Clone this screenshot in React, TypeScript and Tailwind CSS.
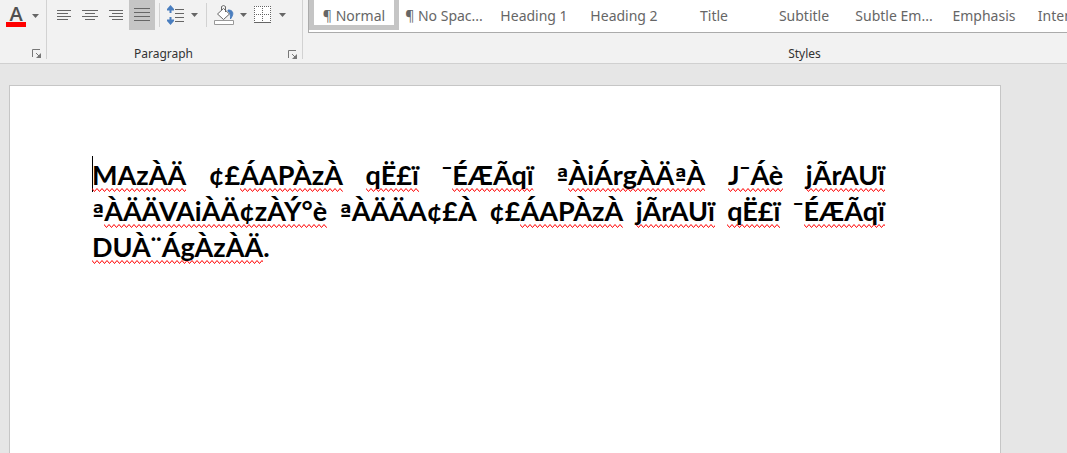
import type { ReactNode } from 'react';

interface Word {
  plain?: string;
  flagged?: string;
  after?: string;
}

interface StyleItem {
  name: string;
  mark?: boolean;
  active?: boolean;
}

const styleItems: StyleItem[] = [
  { name: 'Normal', mark: true, active: true },
  { name: 'No Spac...', mark: true },
  { name: 'Heading 1' },
  { name: 'Heading 2' },
  { name: 'Title' },
  { name: 'Subtitle' },
  { name: 'Subtle Em...' },
  { name: 'Emphasis' },
  { name: 'Intense E...' },
];

const lines: Word[][] = [
  [
    { flagged: 'MAzÀÄ' },
    { plain: '¢£', flagged: 'ÁAPÀzÀ' },
    { flagged: 'qË£ï' },
    { plain: '¯', flagged: 'ÉÆÃqï' },
    { plain: 'ª', flagged: 'ÀiÁrgÀÄªÀ' },
    { flagged: 'J¯Áè' },
    { flagged: 'jÃrAUï' },
  ],
  [
    { plain: 'ª', flagged: 'ÀÄÄVAiÀÄ¢zÀÝ°è' },
    { plain: 'ªÀÄÄA¢£À' },
    { plain: '¢£', flagged: 'ÁAPÀzÀ' },
    { flagged: 'jÃrAUï' },
    { flagged: 'qË£ï' },
    { plain: '¯', flagged: 'ÉÆÃqï' },
  ],
  [{ flagged: 'DUÀ¨ÁgÀzÀÄ', after: '.' }],
];

function Caret() {
  return (
    <svg width="7" height="4" viewBox="0 0 7 4" aria-hidden="true">
      <path d="M0 0h7L3.5 4z" fill="#666" />
    </svg>
  );
}

function Launcher({ label }: { label: string }) {
  return (
    <button aria-label={label} className="shrink-0">
      <svg width="10" height="9" viewBox="0 0 10 9" fill="none" stroke="#777" aria-hidden="true">
        <path d="M.5 8V.5H8M4 4l3 3" />
        <path d="M9 4v5H4z" fill="#777" stroke="none" />
      </svg>
    </button>
  );
}

function Divider({ className }: { className: string }) {
  return <div className={`w-px shrink-0 bg-[#d2d2d2] ${className}`} />;
}

function AlignIcon({ d }: { d: string }) {
  return (
    <svg width="16" height="14" viewBox="0 0 16 14" stroke="#666" aria-hidden="true">
      <path d={d} />
    </svg>
  );
}

function ToolButton({ label, className, children }: { label: string; className: string; children: ReactNode }) {
  return (
    <button aria-label={label} className={`flex shrink-0 items-center ${className}`}>
      {children}
    </button>
  );
}

// Lato's ordinal has no underline, so that one glyph comes from DejaVu
function Glyphs({ text }: { text: string }) {
  return text.split(/(ª)/).map((part, i) =>
    part === 'ª' ? (
      <span key={i} className="font-['DejaVu_Sans_Condensed','DejaVu_Sans',sans-serif] text-2xl leading-none">
        ª
      </span>
    ) : (
      part
    )
  );
}

function Squiggle({ text }: { text: string }) {
  return (
    <span className="relative">
      <svg className="absolute -bottom-px left-0 h-1 w-full" aria-hidden="true">
        <rect width="100%" height="4" fill="url(#squiggle)" />
      </svg>
      <span className="relative">
        <Glyphs text={text} />
      </span>
    </span>
  );
}

export default function App() {
  return (
    <div className="flex h-screen flex-col overflow-hidden bg-[#e6e6e6] font-['Noto_Sans','Open_Sans',sans-serif]">
      <svg width="0" height="0" className="absolute" aria-hidden="true">
        <pattern id="squiggle" width="5" height="4" patternUnits="userSpaceOnUse">
          <path d="M-2.5 3.5L0 .5L2.5 3.5L5 .5L7.5 3.5" fill="none" stroke="#f00" />
        </pattern>
      </svg>

      {/* Ribbon */}
      <header className="flex h-16 shrink-0 border-b border-[#d0d0d0] bg-[#f2f2f2]">
        <section aria-label="Font" className="flex w-[46px] shrink-0 flex-col justify-between pb-[5px]">
          <ToolButton label="Font colour" className="h-8 gap-1.5 pl-1.5">
            <span className="flex w-5 flex-col items-center pb-1">
              <span className="h-5 font-['Open_Sans',sans-serif] text-xl leading-6 font-semibold text-[#505050]">A</span>
              <span className="h-[5px] w-5 bg-[#f00]" />
            </span>
            <Caret />
          </ToolButton>
          <div className="flex justify-end pr-1">
            <Launcher label="Font settings" />
          </div>
        </section>
        <Divider className="h-[59px]" />

        {/* Paragraph */}
        <section aria-label="Paragraph" className="flex w-[255px] shrink-0 flex-col justify-between">
          <div className="flex h-8 items-center pb-0.5">
            <ToolButton label="Align left" className="ml-1 h-[30px] w-[26px] justify-center">
              <AlignIcon d="M1 2.5h14M1 5.5h11M1 8.5h14M1 11.5h11" />
            </ToolButton>
            <ToolButton label="Centre" className="h-[30px] w-[26px] justify-center">
              <AlignIcon d="M0 2.5h16M3 5.5h10M0 8.5h16M3 11.5h10" />
            </ToolButton>
            <ToolButton label="Align right" className="h-[30px] w-[26px] justify-center">
              <AlignIcon d="M1 2.5h14M4 5.5h11M1 8.5h14M4 11.5h11" />
            </ToolButton>
            <ToolButton label="Justify" className="h-[30px] w-[26px] justify-center bg-[#c5c5c5]">
              <AlignIcon d="M0 .5h16M0 4.5h16M0 8.5h16M0 12.5h16" />
            </ToolButton>
            <Divider className="mx-1 h-6" />
            <ToolButton label="Line spacing" className="gap-1.5 pl-[3px]">
              <svg width="18" height="20" viewBox="0 0 18 20" fill="none" aria-hidden="true">
                <path d="M8 4.5h9M8 8.5h9M8 12.5h9M8 16.5h9" stroke="#666" />
                <path d="M3.5 2v6M3.5 12v6" stroke="#4a7ebf" strokeWidth="2" />
                <path d="M3.5 0L7 4v1.5H0V4zM3.5 20L7 16v-1.5H0V16z" fill="#4a7ebf" />
              </svg>
              <Caret />
            </ToolButton>
            <Divider className="ml-2 h-6" />
            <ToolButton label="Shading" className="gap-1.5 pl-[7px]">
              <svg width="20" height="20" viewBox="0 0 20 20" fill="none" aria-hidden="true">
                <path d="M14 5c4 0 5.5 2 4.5 5.5l-2 3.5c0-4 0-6-2.5-8z" fill="#4a7ebf" stroke="#4a7ebf" />
                <path d="M3.5 9l6-5.5 6 5.5-6 5.5z" fill="#fff" stroke="#666" />
                <path d="M7.5 5V1.5Q9.5-.5 11.5 1.5V7" stroke="#666" />
                <path d="M.5 15.5h19v4H.5z" fill="#fff" stroke="#999" />
              </svg>
              <Caret />
            </ToolButton>
            <ToolButton label="Borders" className="gap-2 pl-[7px]">
              <svg width="17" height="18" viewBox="0 0 17 18" fill="none" stroke="#666" aria-hidden="true">
                <path d="M0 0h17v17H0z" fill="#fff" stroke="none" />
                <path d="M0 .5h17M0 8.5h17M.5 0v16M8.5 0v16M16.5 0v16" strokeDasharray="1 1" />
                <path d="M0 16.5h17" />
              </svg>
              <Caret />
            </ToolButton>
          </div>
          <div className="flex items-center pr-1 pb-px">
            <span className="flex-1 pr-2 text-center text-xs leading-4 text-[#333]">Paragraph</span>
            <Launcher label="Paragraph settings" />
          </div>
        </section>
        <Divider className="h-[59px]" />

        {/* Styles gallery */}
        <section aria-label="Styles" className="flex min-w-0 flex-1 flex-col justify-between pl-[5px]">
          <div className="flex h-[33px] overflow-hidden border-b border-l border-[#ababab] bg-white">
            {styleItems.map((item) => (
              <button
                key={item.name}
                className={`flex w-[90px] shrink-0 items-center justify-center text-sm whitespace-nowrap text-[#666] ${
                  item.active ? 'h-[30px] border-x-[5px] border-b-[5px] border-[#c5c5c5] pt-1.5' : 'h-8'
                }`}
              >
                {item.mark ? '¶ ' : ''}
                {item.name}
              </button>
            ))}
          </div>
          <span className="w-full pb-px pl-[234px] text-center text-xs leading-4 text-[#333]">Styles</span>
        </section>
      </header>

      {/* Page */}
      <main className="mt-[21px] mr-[66px] ml-[9px] flex-1 border border-b-0 border-[#c6c6c6] bg-white px-[82px] pt-[71px]">
        <div className="mr-[33px] font-['Lato',sans-serif] text-[27px] leading-9 font-bold text-black">
          {lines.map((line, i) => (
            <p key={i} className="relative flex justify-between whitespace-nowrap">
              {i === 0 && <span className="absolute -top-px left-0 h-9 w-px bg-black" />}
              {line.map((word, j) => (
                <span key={j}>
                  {word.plain && <Glyphs text={word.plain} />}
                  {word.flagged && <Squiggle text={word.flagged} />}
                  {word.after}
                </span>
              ))}
            </p>
          ))}
        </div>
      </main>
    </div>
  );
}
